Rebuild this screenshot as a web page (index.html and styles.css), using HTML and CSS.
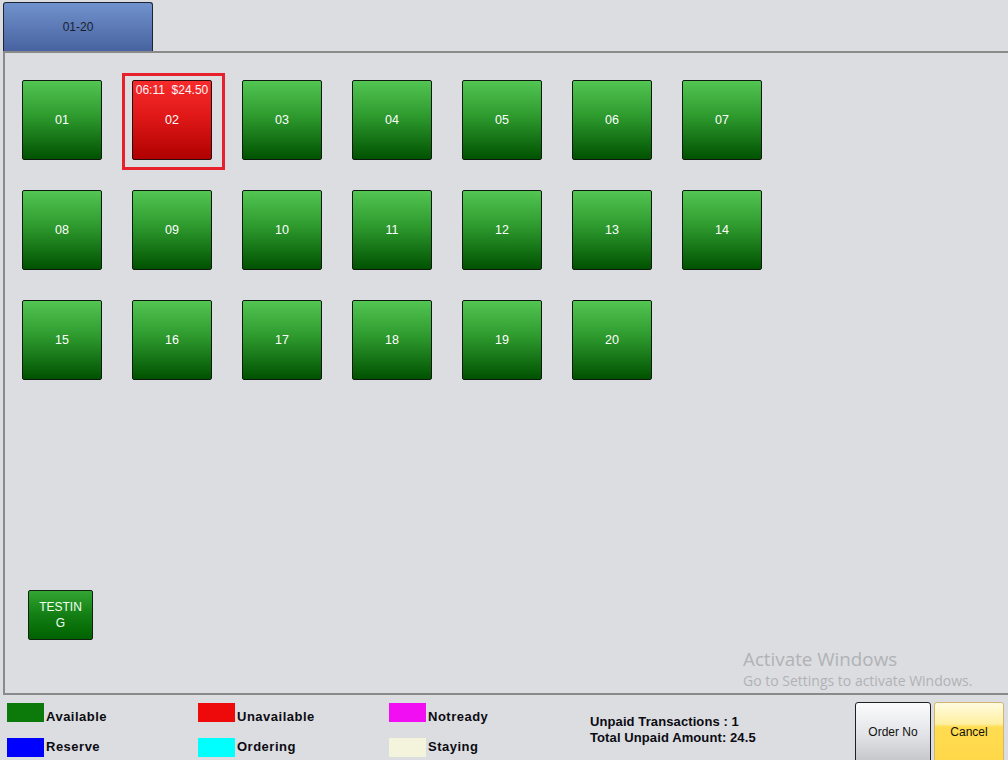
FILE: index.html
```html
<!DOCTYPE html>
<html>
<head>
<meta charset="utf-8">
<link rel="stylesheet" href="styles.css">
</head>
<body>
<div class="app">
  <div class="tabs">
    <div class="tab">01-20</div>
  </div>
  <div class="panel">
    <div class="grid">
      <div class="tile">01</div>
      <div class="tile busy selected"><span class="info">06:11&nbsp;&nbsp;$24.50</span>02</div>
      <div class="tile">03</div>
      <div class="tile">04</div>
      <div class="tile">05</div>
      <div class="tile">06</div>
      <div class="tile">07</div>
      <div class="tile">08</div>
      <div class="tile">09</div>
      <div class="tile">10</div>
      <div class="tile">11</div>
      <div class="tile">12</div>
      <div class="tile">13</div>
      <div class="tile">14</div>
      <div class="tile">15</div>
      <div class="tile">16</div>
      <div class="tile">17</div>
      <div class="tile">18</div>
      <div class="tile">19</div>
      <div class="tile">20</div>
    </div>
    <div class="testing">TESTIN<br>G</div>
    <div class="watermark">
      <div class="wm-title">Activate Windows</div>
      <div class="wm-sub">Go to Settings to activate Windows.</div>
    </div>
  </div>
  <div class="footer">
    <div class="legend">
      <div class="item top"><span class="sw available"></span><span class="lbl">Available</span></div>
      <div class="item top"><span class="sw unavailable"></span><span class="lbl">Unavailable</span></div>
      <div class="item top"><span class="sw notready"></span><span class="lbl">Notready</span></div>
      <div class="item bottom"><span class="sw reserve"></span><span class="lbl">Reserve</span></div>
      <div class="item bottom"><span class="sw ordering"></span><span class="lbl">Ordering</span></div>
      <div class="item bottom"><span class="sw staying"></span><span class="lbl">Staying</span></div>
    </div>
    <div class="unpaid">
      <div>Unpaid Transactions : 1</div>
      <div>Total Unpaid Amount: 24.5</div>
    </div>
    <div class="buttons">
      <div class="btn order">Order No</div>
      <div class="btn cancel">Cancel</div>
    </div>
  </div>
</div>
</body>
</html>
```

FILE: styles.css
```css
html, body {
  margin: 0;
  padding: 0;
  background: #dcdde1;
  overflow: hidden;
}
.app {
  width: 1008px;
  height: 760px;
  overflow: hidden;
  font-family: "Liberation Sans", Arial, sans-serif;
}
.tabs {
  height: 51px;
  display: flex;
  align-items: flex-end;
  padding-left: 3px;
}
.tab {
  box-sizing: border-box;
  width: 150px;
  height: 49px;
  border: 1px solid #1e2433;
  border-bottom: none;
  border-radius: 3px 3px 0 0;
  background: linear-gradient(#7092cd, #4862a0);
  color: #1a1e2c;
  font-size: 12px;
  display: flex;
  align-items: center;
  justify-content: center;
}
.panel {
  position: relative;
  box-sizing: border-box;
  margin-left: 3px;
  width: 1006px;
  height: 644px;
  border: 2px solid #8a8a8a;
  border-right-width: 1px;
  padding: 27px 0 0 17px;
}
.grid {
  display: grid;
  grid-template-columns: repeat(7, 80px);
  grid-auto-rows: 80px;
  column-gap: 30px;
  row-gap: 30px;
}
.tile {
  position: relative;
  box-sizing: border-box;
  border: 1px solid #0d1a0d;
  border-radius: 2px;
  background: linear-gradient(#52c552, #2e9a2e 45%, #005200);
  color: #ffffff;
  font-size: 12.5px;
  display: flex;
  align-items: center;
  justify-content: center;
}
.tile.busy {
  background: linear-gradient(#f62b2b, #e01818 45%, #b00000);
  border-color: #2a0a0a;
}
.tile.selected::after {
  content: "";
  position: absolute;
  left: -11px;
  top: -8px;
  width: 103px;
  height: 97px;
  box-sizing: border-box;
  border: 3px solid #e8202c;
}
.info {
  position: absolute;
  top: 2px;
  left: 0;
  right: 0;
  text-align: center;
  font-size: 12px;
  color: #fff4f6;
}
.testing {
  box-sizing: border-box;
  margin: 210px 0 0 6px;
  width: 65px;
  height: 50px;
  border: 1px solid #112211;
  border-radius: 2px;
  background: linear-gradient(#33a533, #137e13 50%, #006200);
  color: #f4fff4;
  font-size: 12px;
  line-height: 16px;
  text-align: center;
  display: flex;
  align-items: center;
  justify-content: center;
}
.watermark {
  position: absolute;
  left: 738px;
  top: 594px;
  color: #b0b2b6;
  font-family: "Open Sans", "Noto Sans", sans-serif;
}
.wm-title {
  font-size: 18.8px;
  line-height: 24px;
}
.wm-sub {
  font-size: 14px;
  line-height: 20px;
}
.footer {
  display: flex;
  height: 65px;
}
.legend {
  display: grid;
  grid-template-columns: repeat(3, 191px);
  grid-auto-rows: 35px;
  padding: 8px 0 0 7px;
}
.item {
  display: flex;
  align-items: flex-start;
  height: 19px;
  font-size: 13px;
  font-weight: bold;
  color: #0b0b12;
  line-height: 14px;
  letter-spacing: 0.5px;
}
.item.top .lbl { margin-top: 7px; }
.item.bottom .lbl { margin-top: 2px; }
.sw {
  width: 37px;
  height: 19px;
  margin-right: 2px;
  flex: none;
}
.available { background: #0b7a0b; }
.unavailable { background: #ee0a0a; }
.notready { background: #f20ef2; }
.reserve { background: #0000ff; }
.ordering { background: #00ffff; }
.staying { background: #f4f4dc; }
.unpaid {
  margin: 19px 0 0 10px;
  font-size: 13px;
  font-weight: bold;
  line-height: 16px;
  color: #0b0b12;
  letter-spacing: 0.1px;
}
.buttons {
  margin-left: auto;
  margin-right: 4px;
  padding-top: 7px;
  display: flex;
  gap: 3px;
}
.btn {
  box-sizing: border-box;
  height: 62px;
  border-radius: 3px;
  font-size: 12px;
  display: flex;
  align-items: center;
  justify-content: center;
  color: #111;
  padding-bottom: 2px;
}
.order {
  width: 76px;
  border: 1px solid #202020;
  background: linear-gradient(#fbfbfd, #e4e5e8 50%, #c4c5c9);
}
.cancel {
  width: 70px;
  border: 1px solid #d4b470;
  background: linear-gradient(#fffbe0, #fff0a0 35%, #ffdc50 40%, #ffd848);
}
```
